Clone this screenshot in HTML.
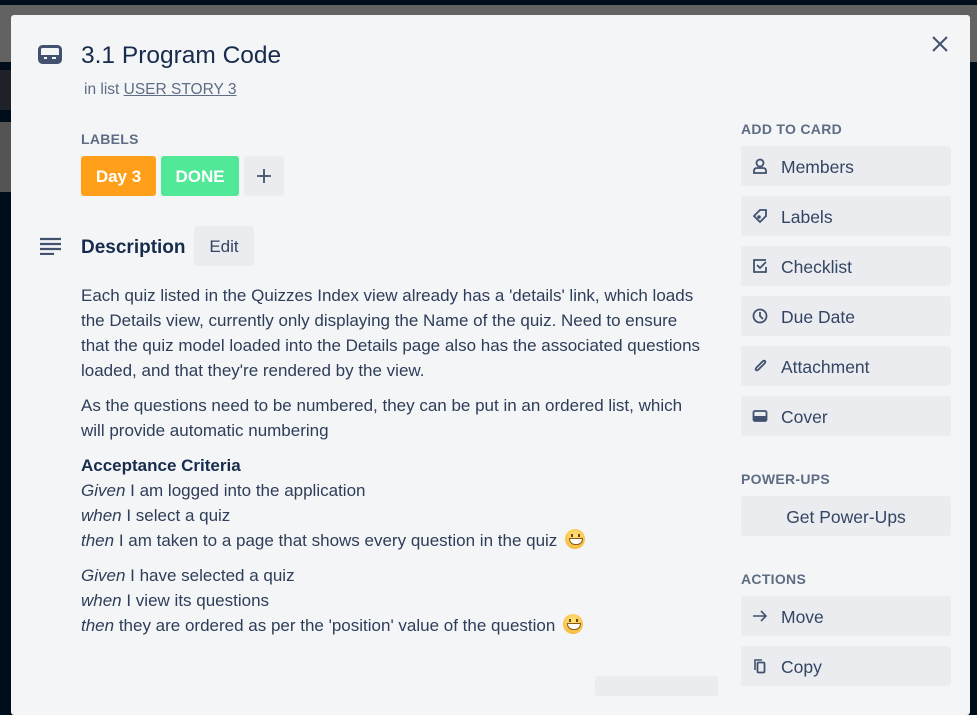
<!DOCTYPE html>
<html><head><meta charset="utf-8"><style>
*{margin:0;padding:0;box-sizing:border-box}
body{width:977px;height:686px;overflow:hidden;background:#000d1a;font-family:"Liberation Sans",sans-serif;position:relative;color:#172b4d}
.a{position:absolute}
.modal{left:11px;top:15px;width:959px;height:700px;background:#f4f5f7;border-radius:3px}
.t{font-size:17px;color:#2e3d58;white-space:nowrap;line-height:25px}
.h{font-size:14px;font-weight:bold;color:#5e6c84;letter-spacing:.3px}
.btn{left:741px;width:210px;height:40px;background:#eaecf0;border-radius:3px;font-size:17.5px;color:#344563;line-height:43px;padding-left:40px}
.btn svg{position:absolute;left:11px;top:12px}
i{font-style:italic}
.emo{display:inline-block;width:20px;height:20px;border-radius:50%;background:radial-gradient(circle at 50% 35%,#ffe27a,#f5b130);vertical-align:-3px;position:relative;margin-left:3px}
.emo:after{content:"";position:absolute;left:4px;top:9px;width:12px;height:5px;background:#fff;border:1px solid #8a5a10;border-radius:0 0 6px 6px}
.emo:before{content:"";position:absolute;left:6px;top:5px;width:2px;height:3px;background:#6b4510;box-shadow:7px 0 #6b4510}
</style></head><body>
<div class="a" style="left:0;top:5px;width:977px;height:57px;background:#626262"></div>
<div class="a" style="left:0;top:70px;width:11px;height:40px;background:#1e2127"></div>
<div class="a" style="left:0;top:122px;width:11px;height:70px;background:#545454"></div>
<div class="a modal"></div>
<svg class="a" style="left:38px;top:45px" width="24" height="20" viewBox="0 0 24 20"><rect x="1.5" y="1.5" width="21" height="16" rx="3" fill="none" stroke="#42526e" stroke-width="3"/><rect x="1.5" y="10" width="21" height="7.5" fill="#42526e"/><rect x="6" y="12" width="3" height="2" fill="#f4f5f7"/><rect x="14" y="12" width="4" height="2" fill="#f4f5f7"/></svg>
<div class="a" style="left:81px;top:42px;font-size:24.5px;color:#172b4d">3.1 Program Code</div>
<div class="a" style="left:84px;top:81px;font-size:15.5px;color:#5e6c84">in list <span style="text-decoration:underline">USER STORY 3</span></div>
<svg class="a" style="left:932px;top:36px" width="16" height="16"><path d="M1 1L15 15M15 1L1 15" stroke="#42526e" stroke-width="2"/></svg>
<div class="a h" style="left:81px;top:131px">LABELS</div>
<div class="a" style="left:81px;top:156px;width:75px;height:40px;background:#ff9f1a;border-radius:3px;color:#fff;font-weight:bold;font-size:17px;line-height:42px;text-align:center">Day 3</div>
<div class="a" style="left:161px;top:156px;width:78px;height:40px;background:#51e898;border-radius:3px;color:#fff;font-weight:bold;font-size:17px;line-height:42px;text-align:center">DONE</div>
<div class="a" style="left:244px;top:156px;width:40px;height:40px;background:#eaecf0;border-radius:3px"><svg style="position:absolute;left:12px;top:12px" width="16" height="16"><path d="M8 1V15M1 8H15" stroke="#42526e" stroke-width="1.8"/></svg></div>
<svg class="a" style="left:39px;top:237px" width="24" height="18"><path d="M1 2H22M1 7H22M1 12H22M1 17H15" stroke="#42526e" stroke-width="2.2"/></svg>
<div class="a" style="left:81px;top:237px;font-size:19px;font-weight:bold;color:#172b4d">Description</div>
<div class="a" style="left:194px;top:226px;width:60px;height:40px;background:#eaecf0;border-radius:3px;font-size:17px;color:#344563;line-height:42px;text-align:center">Edit</div>
<div class="a t" style="left:81px;top:283px">Each quiz listed in the Quizzes Index view already has a 'details' link, which loads<br>the Details view, currently only displaying the Name of the quiz. Need to ensure<br>that the quiz model loaded into the Details page also has the associated questions<br>loaded, and that they're rendered by the view.</div>
<div class="a t" style="left:81px;top:393px">As the questions need to be numbered, they can be put in an ordered list, which<br>will provide automatic numbering</div>
<div class="a t" style="left:81px;top:453px"><b style="color:#172b4d">Acceptance Criteria</b><br><i>Given</i> I am logged into the application<br><i>when</i> I select a quiz<br><i>then</i> I am taken to a page that shows every question in the quiz <span class="emo"></span></div>
<div class="a t" style="left:81px;top:563px"><i>Given</i> I have selected a quiz<br><i>when</i> I view its questions<br><i>then</i> they are ordered as per the 'position' value of the question <span class="emo"></span></div>
<div class="a" style="left:595px;top:676px;width:123px;height:20px;background:#eaecf0;border-radius:3px"></div>
<div class="a h" style="left:741px;top:121px">ADD TO CARD</div>
<div class="a btn" style="top:146px"><svg width="16" height="16"><circle cx="8" cy="5" r="3.5" fill="none" stroke="#42526e" stroke-width="1.8"/><path d="M2 15V13Q2 10 5 10H11Q14 10 14 13V15Z" fill="none" stroke="#42526e" stroke-width="1.8"/></svg>Members</div>
<div class="a btn" style="top:196px"><svg width="16" height="16"><path d="M2 8L8 2H14V8L8 14Z" fill="none" stroke="#42526e" stroke-width="1.8"/><circle cx="7" cy="9" r="1.8" fill="#42526e"/></svg>Labels</div>
<div class="a btn" style="top:246px"><svg width="16" height="16"><path d="M14 2H2V14H14V9" fill="none" stroke="#42526e" stroke-width="1.8"/><path d="M5 7L8 10L14 4" fill="none" stroke="#42526e" stroke-width="1.8"/></svg>Checklist</div>
<div class="a btn" style="top:296px"><svg width="16" height="16"><circle cx="8" cy="8" r="6.5" fill="none" stroke="#42526e" stroke-width="1.8"/><path d="M8 4V8L11 11" fill="none" stroke="#42526e" stroke-width="1.8"/></svg>Due Date</div>
<div class="a btn" style="top:346px"><svg width="16" height="16"><path d="M12 6L7 11Q5 13 4 12Q3 11 5 9L10 4Q12 2 13 3Q14 4 12 6L7 11" fill="none" stroke="#42526e" stroke-width="1.8"/></svg>Attachment</div>
<div class="a btn" style="top:396px"><svg width="16" height="16"><rect x="1.5" y="3" width="13" height="10" rx="1.5" fill="none" stroke="#42526e" stroke-width="1.8"/><rect x="1.5" y="8" width="13" height="5" fill="#42526e"/></svg>Cover</div>
<div class="a h" style="left:741px;top:471px">POWER-UPS</div>
<div class="a btn" style="top:496px;padding-left:0;text-align:center">Get Power-Ups</div>
<div class="a h" style="left:741px;top:571px">ACTIONS</div>
<div class="a btn" style="top:596px"><svg width="16" height="16"><path d="M1 8H14M9 3L14 8L9 13" fill="none" stroke="#42526e" stroke-width="1.6"/></svg>Move</div>
<div class="a btn" style="top:646px"><svg width="16" height="16"><path d="M3 12V2H10" fill="none" stroke="#42526e" stroke-width="1.6"/><rect x="5.5" y="4.5" width="7" height="10" rx="1" fill="none" stroke="#42526e" stroke-width="1.8"/></svg>Copy</div>
</body></html>
